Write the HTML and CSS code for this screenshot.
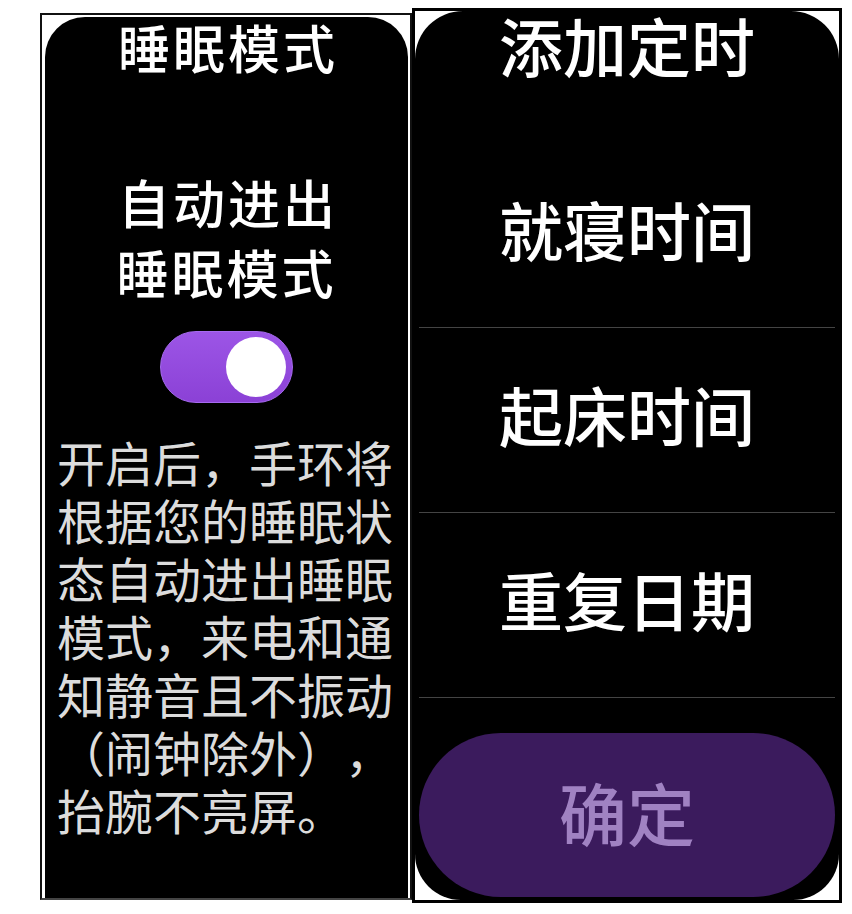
FILE: index.html
```html
<!DOCTYPE html>
<html lang="zh-CN">
<head>
<meta charset="utf-8">
<title>睡眠模式</title>
<link rel="stylesheet" href="styles.css">
</head>
<body>
<div class="stage">
  <section class="panel panel-left">
    <div class="screen screen-left">
      <h1 class="left-title">睡眠模式</h1>
      <h2 class="left-heading">自动进出<br>睡眠模式</h2>
      <div class="toggle"><span class="knob"></span></div>
      <p class="desc">开启后，手环将<br>根据您的睡眠状<br>态自动进出睡眠<br>模式，来电和通<br>知静音且不振动<br>（闹钟除外），<br>抬腕不亮屏。</p>
    </div>
  </section>
  <section class="panel panel-right">
    <div class="screen screen-right">
      <h1 class="right-title">添加定时</h1>
      <div class="row">就寝时间</div>
      <div class="row">起床时间</div>
      <div class="row">重复日期</div>
      <div class="confirm">确定</div>
    </div>
  </section>
</div>
</body>
</html>
```
FILE: styles.css
```css
html, body {
  margin: 0;
  padding: 0;
  background: #ffffff;
}

body {
  width: 852px;
  height: 914px;
  overflow: hidden;
  font-family: "Noto Sans CJK SC", "Noto Sans", sans-serif;
  text-spacing-trim: space-all;
}

.stage {
  display: flex;
  align-items: flex-start;
  padding-left: 40px;
  padding-top: 8px;
}

.panel {
  box-sizing: border-box;
  background: #ffffff;
  display: flex;
  flex-direction: column;
}

.panel-left {
  width: 372px;
  height: 887px;
  margin-top: 5px;
  border: 2px solid #111;
  border-bottom-color: #444;
  padding: 2px 2px 0 3px;
}

.panel-right {
  width: 430px;
  height: 895px;
  border: 3px solid #000;
}

.screen {
  flex: 1;
  background: #000;
  display: flex;
  flex-direction: column;
  align-items: center;
}

.screen-left {
  border-radius: 40px 40px 0 0;
  padding-top: 2px;
}

.screen-right {
  border-radius: 48px 48px 46px 46px;
  padding: 1px 4px 0 4px;
  align-items: stretch;
}

.left-title {
  margin: 0;
  font-size: 52px;
  line-height: 56px;
  font-weight: 500;
  letter-spacing: 3px;
  text-indent: 3px;
  color: #fff;
  text-align: center;
}

.left-heading {
  margin: 92px 0 0 0;
  font-size: 52px;
  line-height: 70px;
  font-weight: 500;
  letter-spacing: 3px;
  text-indent: 3px;
  color: #fff;
  text-align: center;
}

.toggle {
  box-sizing: border-box;
  margin-top: 24px;
  width: 133px;
  height: 72px;
  border-radius: 36px;
  background: linear-gradient(#9c55e6, #8b41d6);
  border: 1px solid #a66af0;
  display: flex;
  align-items: center;
  justify-content: flex-end;
  padding-right: 6px;
}

.knob {
  width: 60px;
  height: 60px;
  border-radius: 50%;
  background: radial-gradient(circle at 50% 45%, #ffffff 70%, #e9e4ee 100%);
}

.desc {
  align-self: flex-start;
  margin: 29px 0 0 12px;
  font-size: 48px;
  line-height: 58px;
  color: #dcdcdc;
  white-space: nowrap;
  text-spacing-trim: space-all;
}

.right-title {
  margin: 0;
  font-size: 64px;
  line-height: 64px;
  font-weight: 500;
  color: #fff;
  text-align: center;
}

.row {
  box-sizing: border-box;
  height: 185px;
  border-bottom: 1px solid #444;
  display: flex;
  align-items: center;
  justify-content: center;
  padding-bottom: 14px;
  font-size: 64px;
  line-height: 64px;
  font-weight: 500;
  color: #fff;
}

.right-title + .row {
  margin-top: 67px;
}

.confirm {
  margin-top: 35px;
  height: 164px;
  border-radius: 82px;
  background: #3b1b5d;
  display: flex;
  align-items: center;
  justify-content: center;
  padding-bottom: 6px;
  box-sizing: border-box;
  font-size: 68px;
  line-height: 68px;
  font-weight: 500;
  color: #a082c2;
}
```
